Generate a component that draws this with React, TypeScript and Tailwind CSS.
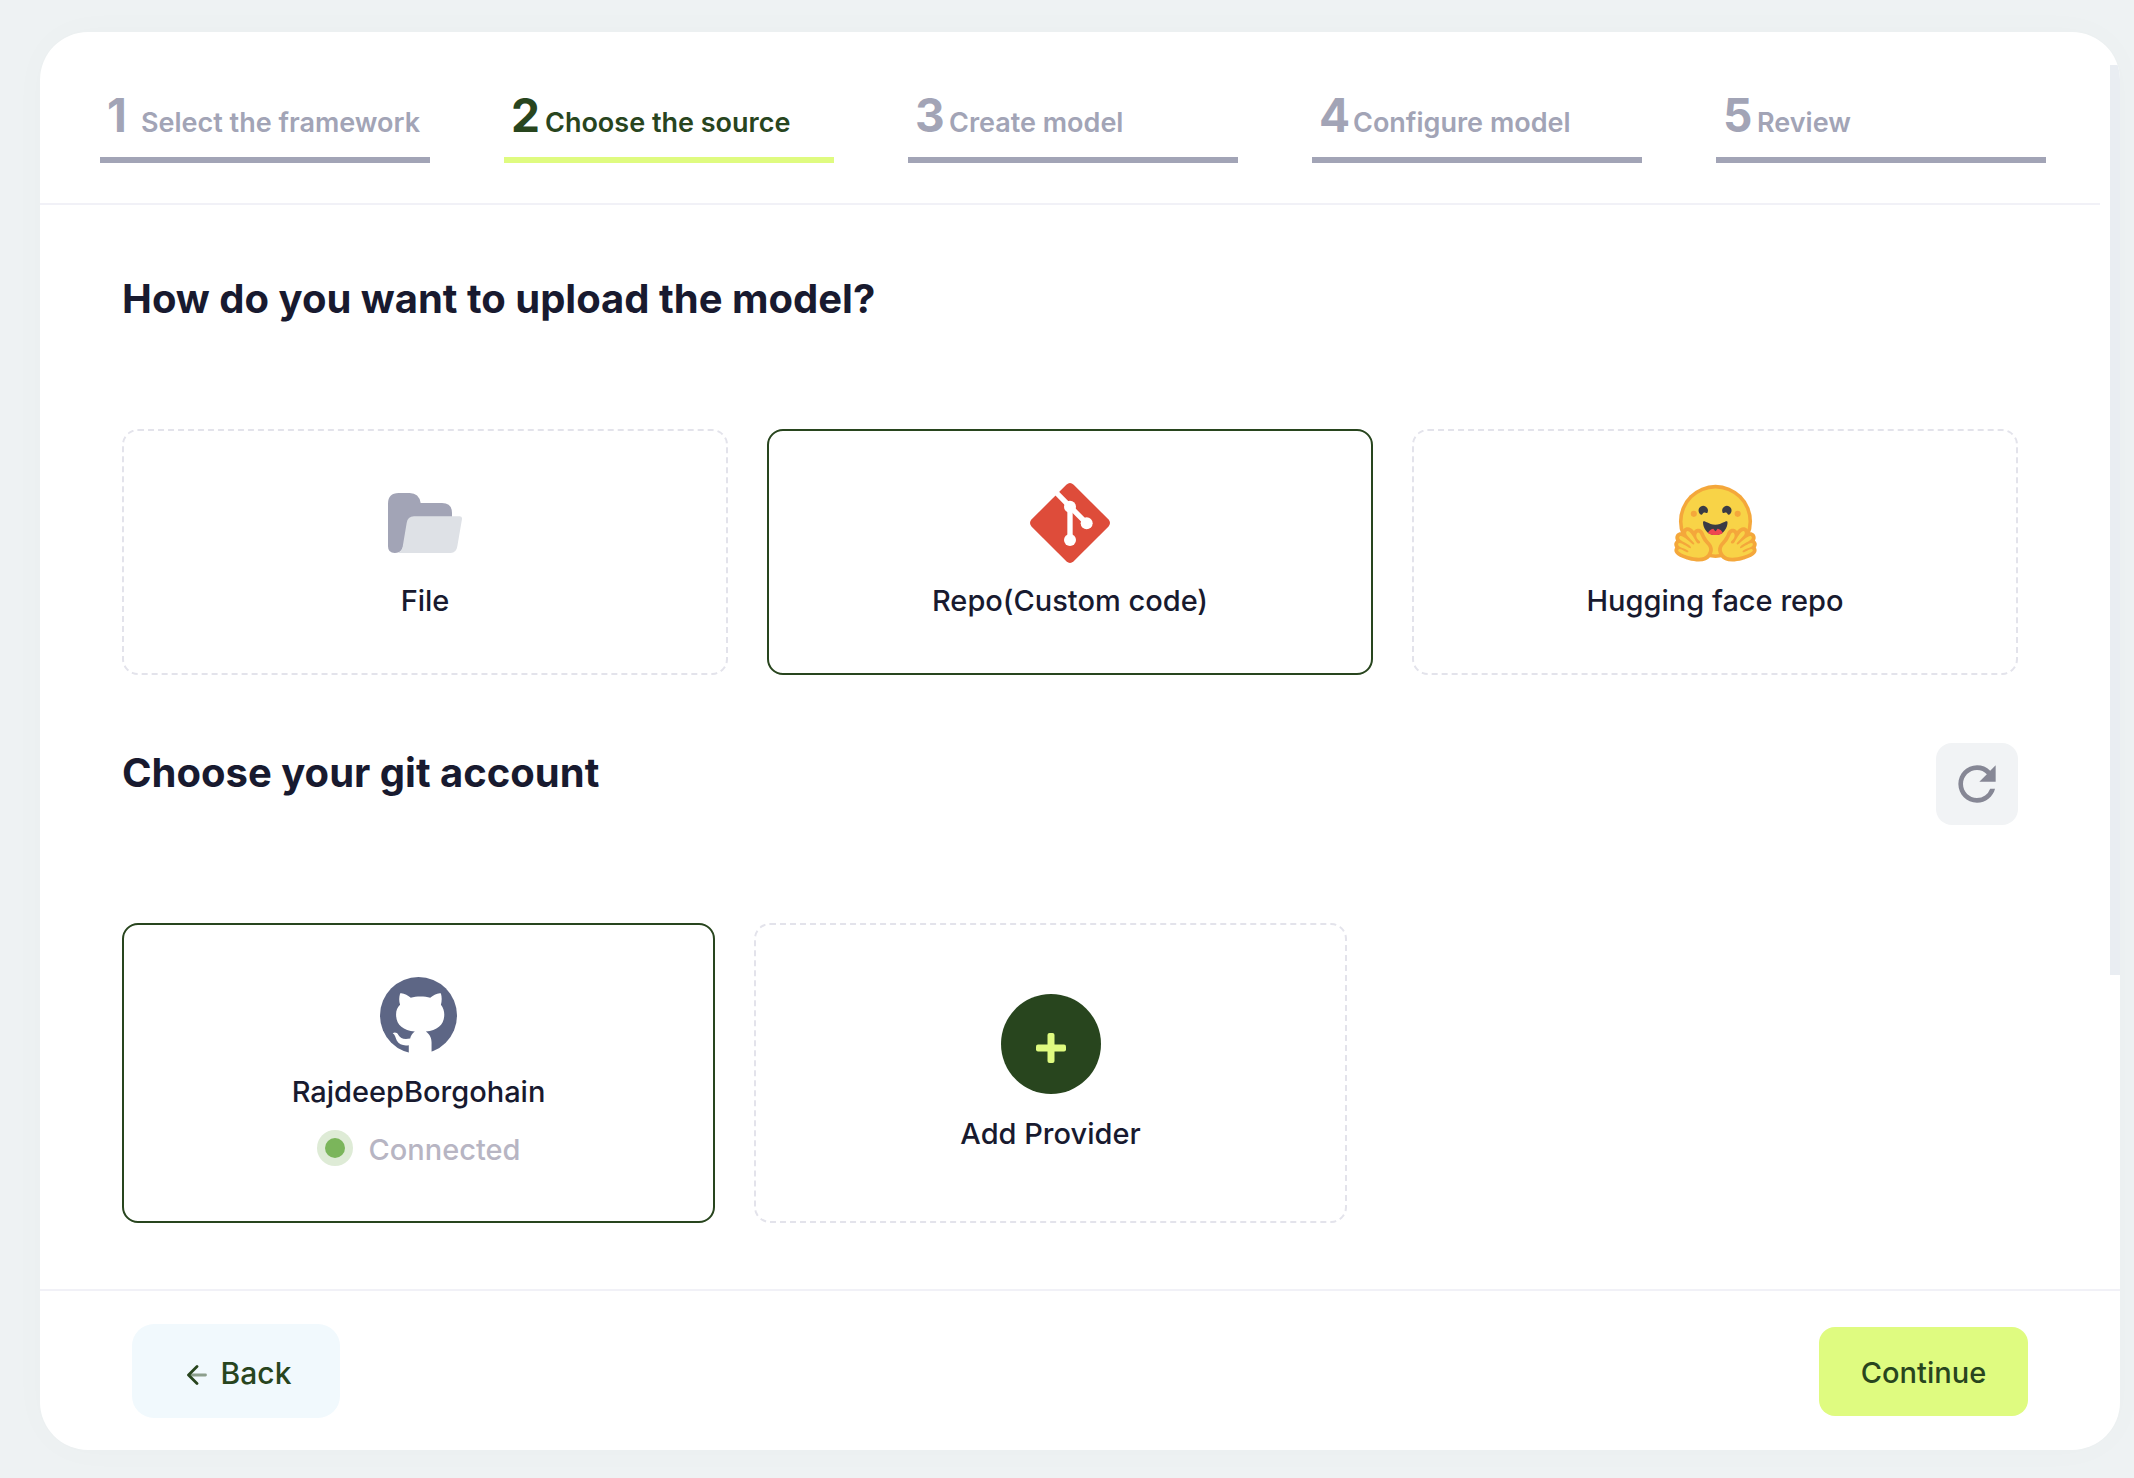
import { useState } from "react";
import type { ReactNode } from "react";
import { MdRefresh } from "react-icons/md";

const steps = ["Select the framework", "Choose the source", "Create model", "Configure model", "Review"];

function FolderIcon() {
  return (
    <svg viewBox="0 0 222 180" className="h-[60px] w-[74px]" aria-hidden="true">
      <path
        fill="#a2a4b6"
        d="M0 32Q0 0 32 0H65Q93 0 98 30H162Q192 30 192 60V76L66 100L44 165Q38 180 20 180Q0 180 0 160Z"
      />
      <path fill="#dee1e6" d="M24 180Q41 178 44 161L56 90Q59 70 78 70H215Q223 70 222 78L208 160Q205 180 188 180Z" />
    </svg>
  );
}

function GitIcon() {
  return (
    <svg viewBox="0 0 240 240" className="size-20" aria-hidden="true">
      <path
        fill="#de4c3a"
        d="M109 5Q120 -5 131 5L235 109Q245 120 235 131L131 235Q120 245 109 235L5 131Q-5 120 5 109Z"
      />
      <g stroke="#fff" strokeWidth="16" fill="none">
        <path d="M74 24L120 71L170 121" />
        <path d="M120 71V171" />
      </g>
      <g fill="#fff">
        <circle cx="120" cy="71" r="18" />
        <circle cx="170" cy="121" r="18" />
        <circle cx="120" cy="171" r="18" />
      </g>
    </svg>
  );
}

function Hand() {
  return (
    <>
      <path
        fill="#f4a73b"
        d="M17.5238 48C15.9048 48 14.4578 48.665 13.4488 49.871C12.8248 50.618 12.1728 51.822 12.1198 53.625C11.4408 53.43 10.7878 53.321 10.1778 53.321C8.6278 53.321 7.2278 53.915 6.2378 54.994C4.9658 56.379 4.4008 58.081 4.6468 59.784C4.7638 60.595 5.0348 61.322 5.4398 61.995C4.5858 62.686 3.9568 63.648 3.6528 64.805C3.4148 65.712 3.1708 67.601 4.4448 69.547C4.3638 69.674 4.2878 69.806 4.2168 69.941C3.4508 71.395 3.4018 73.038 4.0778 74.568C5.1028 76.887 7.6498 78.714 12.5958 80.675C15.6728 81.895 18.4878 82.675 18.5128 82.682C22.5808 83.737 26.2598 84.273 29.4448 84.273C35.2988 84.273 39.4898 82.48 41.9018 78.944C45.7838 73.25 45.2288 68.042 40.2058 63.022C37.4258 60.244 35.5778 56.148 35.1928 55.247C34.4168 52.585 32.3648 49.626 28.9538 49.626C28.6668 49.626 28.3758 49.649 28.0888 49.694C26.5948 49.929 25.2888 50.789 24.3558 52.081C23.3488 50.829 22.3708 49.833 21.4858 49.271C20.1518 48.425 18.8188 48 17.5238 48Z"
      />
      <path
        fill="#f8d347"
        d="M38.5967 76.6898C41.3487 72.6538 41.1537 69.6248 37.3777 65.8508C33.6017 62.0778 31.4037 56.5578 31.4037 56.5578C31.4037 56.5578 30.5827 53.3518 28.7127 53.6468C26.8427 53.9418 25.4697 58.7328 29.3867 61.6638C33.3037 64.5938 28.6067 66.5848 27.0997 63.8328C25.5927 61.0808 21.4777 54.0058 19.3437 52.6528C17.2107 51.2998 15.7087 52.0578 16.2117 54.8468C16.7147 57.6358 25.6357 64.3958 24.7677 65.8588C23.8997 67.3208 20.8407 64.1398 20.8407 64.1398C20.8407 64.1398 11.2697 55.4298 9.1847 57.6988C7.1007 59.9688 10.7657 61.8708 15.9887 65.0328C21.2127 68.1938 21.6177 69.0288 20.8767 70.2248C20.1347 71.4208 8.6047 61.6998 7.5217 65.8208C6.4397 69.9418 19.2887 71.1378 18.4957 73.9828C17.7027 76.8288 9.4447 68.5978 7.7557 71.8048C6.0657 75.0128 19.4087 78.7818 19.5167 78.8098C23.8267 79.9278 34.7727 82.2968 38.5967 76.6898Z"
      />
    </>
  );
}

function HuggingFaceIcon() {
  return (
    <svg viewBox="0 0 94.4 88" className="h-[83px] w-[89px]" aria-hidden="true">
      <circle cx="47.2" cy="41.75" r="38.75" fill="#f4a73b" />
      <circle cx="47.2" cy="41.75" r="35" fill="#f8d347" />
      <g fill="#3a3b45">
        <path d="M58.5024 32.2915C59.7768 32.7415 60.2839 35.3615 61.5713 34.6769C64.0095 33.3805 64.9351 30.353 63.6387 27.9148C62.3423 25.4767 59.3148 24.5511 56.8766 25.8475C54.4384 27.1439 53.5128 30.1714 54.8092 32.6096C55.4211 33.7604 57.3632 31.8892 58.5024 32.2915Z" />
        <path d="M34.9454 32.2915C33.671 32.7415 33.164 35.3615 31.8766 34.6769C29.4384 33.3805 28.5128 30.353 29.8092 27.9148C31.1056 25.4767 34.1331 24.5511 36.5713 25.8475C39.0095 27.1439 39.9351 30.1714 38.6387 32.6096C38.0268 33.7604 36.0846 31.8892 34.9454 32.2915Z" />
        <path d="M46.9619 56.289C56.7903 56.289 59.9619 47.5261 59.9619 43.0262C59.9619 40.6875 58.3898 41.4236 55.8718 42.6702C53.5449 43.8222 50.4102 45.4101 46.9619 45.4101C43.5 45.4101 40.4 43.8222 38.05 42.6702C35.5 41.4236 33.9619 40.6875 33.9619 43.0262C33.9619 47.5261 37.1334 56.289 46.9619 56.289Z" />
      </g>
      <path
        fill="#ef4550"
        d="M39.2 54C40.2 51.8 42.2 50.1 44.7 49.5C45.5 49.3 46.3 52.1 47.2 52.1C48.1 52.1 49 49.3 49.8 49.6C52.2 50.3 54.1 51.9 54.9 54C52.9 55.5 50.3 56.289 46.96 56.289C43.8 56.289 41.2 55.5 39.2 54Z"
      />
      <circle cx="70.7" cy="33.75" r="3.25" fill="#f4a73b" />
      <circle cx="24.2" cy="33.75" r="3.25" fill="#f4a73b" />
      <Hand />
      <g transform="matrix(-1 0 0 1 94.4 0)">
        <Hand />
      </g>
    </svg>
  );
}

function GithubIcon() {
  return (
    <svg viewBox="0 0 230 230" className="size-[77px]" aria-hidden="true">
      <circle cx="115" cy="115" r="115" fill="#5d6685" />
      <path
        fill="#fff"
        d="M86 230V204C70 206 57 203 50 190C46 180 45 172 38 168C44 164 51 166 55 173C62 184 70 187 90 184C92 176 96 168 104 163C68 159 48 143 48 112C48 100 52 90 60 83C56 70 57 60 60 49C70 47 84 55 92 62C108 57 134 57 150 62C158 55 172 47 182 49C185 60 185 72 182 83C189 92 192 102 192 112C192 143 172 159 137 163C150 172 154 184 154 196V230Z"
      />
    </svg>
  );
}

function PlusIcon() {
  return (
    <span className="flex size-[100px] items-center justify-center rounded-full bg-[#28451e] pt-2">
      <svg viewBox="0 0 30 30" className="size-[30px]" fill="#dffb80" aria-hidden="true">
        <rect x="11.5" y="0" width="7" height="30" rx="2" />
        <rect x="0" y="11.5" width="30" height="7" rx="2" />
      </svg>
    </span>
  );
}

function OptionCard({
  selected,
  onClick,
  className,
  children,
}: {
  selected: boolean;
  onClick: () => void;
  className: string;
  children: ReactNode;
}) {
  return (
    <button
      type="button"
      aria-pressed={selected}
      onClick={onClick}
      className={`flex flex-col items-center justify-center rounded-2xl border-2 text-[29px] leading-9 font-medium ${
        selected ? "border-solid border-[#28451e]" : "border-dashed border-[#e3e3eb]"
      } ${className}`}
    >
      {children}
    </button>
  );
}

export default function App() {
  const [source, setSource] = useState("Repo(Custom code)");
  const sources = [
    { label: "File", icon: <FolderIcon /> },
    { label: "Repo(Custom code)", icon: <GitIcon /> },
    { label: "Hugging face repo", icon: <HuggingFaceIcon /> },
  ];

  return (
    <div className="flex min-h-screen flex-col bg-[#eef2f3] pt-8 pr-3.5 pb-7 pl-10 font-['Inter',sans-serif] text-[#181a2f]">
      <div className="flex flex-1 flex-col overflow-hidden rounded-[48px] bg-white shadow-[0_0_40px_rgba(0,0,0,0.02)]">
        <div className="flex flex-1">
          <div className="flex-1">
            <ol className="grid grid-cols-5 gap-[74px] border-b-2 border-[#f1f1f7] pt-[55px] pr-[54px] pb-10 pl-[60px]">
              {steps.map((step, i) => (
                <li
                  key={step}
                  aria-current={i === 1 ? "step" : undefined}
                  className={`flex items-baseline gap-1.5 border-b-[6px] pb-3.5 pl-[7px] whitespace-nowrap ${
                    i === 1 ? "border-[#dffb80] text-[#28451e]" : "border-[#a2a4b6] text-[#a2a4b6]"
                  }`}
                >
                  <span className="w-7 text-[46px] leading-[56px] font-bold">{i + 1}</span>
                  <span className="text-[27px] leading-9 font-semibold">{step}</span>
                </li>
              ))}
            </ol>

            <main className="px-[82px] pb-[66px]">
              <h2 className="pt-[68px] text-[40px] leading-[52px] font-bold">How do you want to upload the model?</h2>
              <div className="mt-[104px] grid grid-cols-3 gap-[39px]">
                {sources.map(({ label, icon }) => (
                  <OptionCard
                    key={label}
                    selected={source === label}
                    onClick={() => setSource(label)}
                    className="gap-5 pt-[52px] pb-[54px]"
                  >
                    <span className="flex h-20 items-center">{icon}</span>
                    <span>{label}</span>
                  </OptionCard>
                ))}
              </div>

              <div className="mt-[68px] flex items-start justify-between">
                <h2 className="pt-1 text-[40px] leading-[52px] font-bold">Choose your git account</h2>
                <button
                  type="button"
                  aria-label="Refresh accounts"
                  className="flex size-[82px] items-center justify-center rounded-2xl bg-[#f1f3f5] text-[#868795]"
                >
                  <MdRefresh className="size-14" />
                </button>
              </div>
              <div className="mt-[98px] grid grid-cols-3">
                <OptionCard selected onClick={() => {}} className="mr-[39px] min-h-[300px]">
                  <GithubIcon />
                  <span className="mt-5">RajdeepBorgohain</span>
                  <span className="mt-5 flex items-center gap-4 text-[#b7b5c3]">
                    <span className="mb-1 flex size-9 items-center justify-center rounded-full bg-[#deebd6]">
                      <span className="size-5 rounded-full bg-[#7bb55b]" />
                    </span>
                    Connected
                  </span>
                </OptionCard>
                <OptionCard selected={false} onClick={() => {}} className="mr-[39px] min-h-[300px] gap-[22px]">
                  <PlusIcon />
                  <span>Add Provider</span>
                </OptionCard>
              </div>
            </main>
          </div>
          <div className="w-5 pt-[33px] pl-2.5">
            <div className="h-[910px] w-2.5 bg-[#e9edf2]" />
          </div>
        </div>

        <footer className="flex items-center justify-between border-t-2 border-[#f1f1f7] px-[92px] pt-[33px] pb-8 leading-9 font-medium text-[#28451e]">
          <button
            type="button"
            className="flex h-[94px] w-52 items-center justify-center gap-3.5 rounded-[22px] bg-[#f1f9fd] pt-1 pl-1.5 text-[30px]"
          >
            <svg
              viewBox="0 0 20 20"
              className="mt-1 size-5"
              fill="none"
              stroke="#28451e"
              strokeWidth="2.8"
              strokeLinecap="round"
              strokeLinejoin="round"
              aria-hidden="true"
            >
              <path d="M3 10H18.5" opacity="0.5" />
              <path d="M10 1.5L1.5 10L10 18.5" />
            </svg>
            Back
          </button>
          <button type="button" className="h-[89px] w-[209px] rounded-2xl bg-[#dffb80] pt-1 text-[29px]">
            Continue
          </button>
        </footer>
      </div>
    </div>
  );
}
